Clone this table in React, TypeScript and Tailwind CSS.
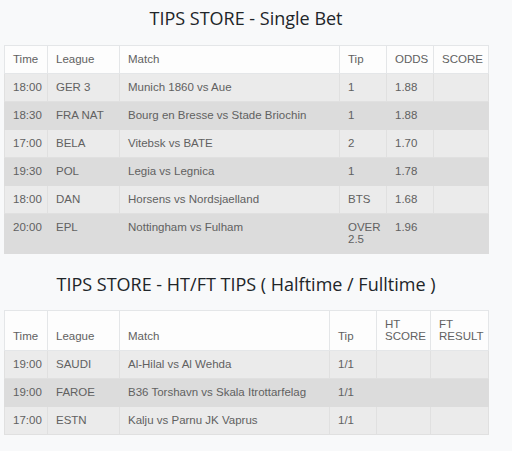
import React from "react";

type Row = string[];

const singleCols = [
  { label: "Time", w: "w-[43px]" },
  { label: "League", w: "w-[72px]" },
  { label: "Match", w: "w-[220px]" },
  { label: "Tip", w: "w-[47px]" },
  { label: "ODDS", w: "w-[47px]" },
  { label: "SCORE", w: "w-[55px]" },
];

const singleRows: Row[] = [
  ["18:00", "GER 3", "Munich 1860 vs Aue", "1", "1.88", ""],
  ["18:30", "FRA NAT", "Bourg en Bresse vs Stade Briochin", "1", "1.88", ""],
  ["17:00", "BELA", "Vitebsk vs BATE", "2", "1.70", ""],
  ["19:30", "POL", "Legia vs Legnica", "1", "1.78", ""],
  ["18:00", "DAN", "Horsens vs Nordsjaelland", "BTS", "1.68", ""],
  ["20:00", "EPL", "Nottingham vs Fulham", "OVER 2.5", "1.96", ""],
];

const htftCols = [
  { label: "Time", w: "w-[43px]" },
  { label: "League", w: "w-[72px]" },
  { label: "Match", w: "w-[210px]" },
  { label: "Tip", w: "w-[47px]" },
  { label: "HT SCORE", w: "w-[54px]" },
  { label: "FT RESULT", w: "w-[58px]" },
];

const htftRows: Row[] = [
  ["19:00", "SAUDI", "Al-Hilal vs Al Wehda", "1/1", "", ""],
  ["19:00", "FAROE", "B36 Torshavn vs Skala Itrottarfelag", "1/1", "", ""],
  ["17:00", "ESTN", "Kalju vs Parnu JK Vaprus", "1/1", "", ""],
];

const TipsTable = ({ cols, rows }: { cols: { label: string; w: string }[]; rows: Row[] }) => {
  return (
    <table className="w-[484px] table-fixed border-collapse text-[11.5px] leading-[12px] text-[#616161] font-['Liberation_Sans',Arial,sans-serif]">
      <thead>
        <tr className="bg-[#fdfdfd]">
          {cols.map((col) => (
            <th
              key={col.label}
              className={`${col.w} border border-[#e4e6e8] px-2 pt-[7px] pb-2 text-left align-bottom font-normal`}
            >
              {col.label}
            </th>
          ))}
        </tr>
      </thead>
      <tbody>
        {rows.map((row, i) => (
          <tr key={i} className={i % 2 === 0 ? "bg-[#ebebeb]" : "bg-[#dcdcdc]"}>
            {row.map((cell, j) => (
              <td
                key={j}
                className={`border px-2 pt-[7px] pb-2 align-top ${i % 2 === 1 ? "border-[#dcdcdc]" : "border-[#e0e0e0]"}`}
              >
                {cell}
              </td>
            ))}
          </tr>
        ))}
      </tbody>
    </table>
  );
};

const App = () => {
  return (
    <div className="min-h-[451px] w-full bg-[#f8f9fa]">
      <div className="ml-[4px] w-[484px] flex flex-col">
        <h2 className="pt-[5px] h-[45px] text-center text-[18px] leading-[26px] text-[#212529] font-['Open_Sans','Noto_Sans',sans-serif]">
          TIPS STORE - Single Bet
        </h2>
        <TipsTable cols={singleCols} rows={singleRows} />
        <h2 className="pt-[17px] h-[56px] text-center text-[18px] leading-[26px] text-[#212529] font-['Open_Sans','Noto_Sans',sans-serif]">
          TIPS STORE - HT/FT TIPS ( Halftime / Fulltime )
        </h2>
        <TipsTable cols={htftCols} rows={htftRows} />
      </div>
    </div>
  );
};

export default App;
